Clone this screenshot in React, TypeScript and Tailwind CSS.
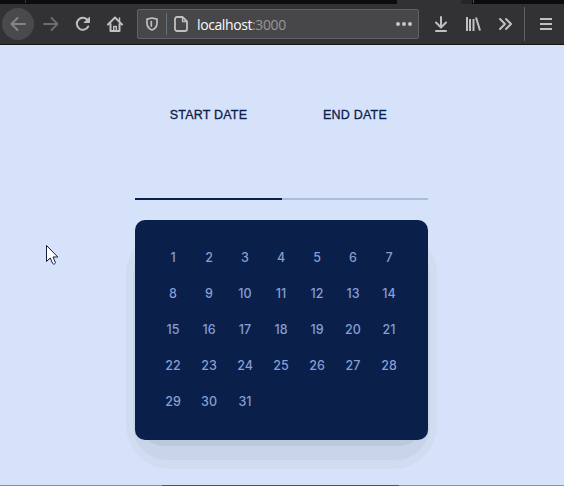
import type { ReactNode } from "react";

const days = Array.from({ length: 31 }, (_, i) => i + 1);

function Icon({ children, className = "", tone = "stroke-[#c0c0c1]" }: { children: ReactNode; className?: string; tone?: string }) {
  return (
    <svg
      viewBox="0 0 16 16"
      className={`block h-4 w-4 shrink-0 fill-none stroke-2 ${tone} ${className}`}
      strokeLinecap="round"
      strokeLinejoin="round"
    >
      {children}
    </svg>
  );
}

function Toolbar() {
  return (
    <header className="h-[45px] border-b border-[#10170f] bg-[#323234]">
      <div className="flex h-1 bg-[#0c0c0d]">
        <div className="h-[3px] w-[26px] border-r border-[#3a3a3b]" />
        <div className="ml-[371px] h-1 w-[64px] bg-[#323234]" />
        <div className="h-1 w-[11px] bg-[#262628]" />
        <div className="ml-px h-[3px] w-px bg-[#4c4c4e]" />
      </div>
      <div className="flex h-10 items-center">
        <div className="ml-[2px] flex h-8 w-8 shrink-0 items-center justify-center rounded-full bg-[#4a4a4c]">
          <Icon tone="stroke-[#858587]">
            <path d="M15 8H1.500M7.500 2 1.500 8l6 6" />
          </Icon>
        </div>
        <Icon className="ml-[9px]" tone="stroke-[#6c6c6e]">
          <path d="M1 8h13.500M8.500 2l6 6-6 6" />
        </Icon>
        <Icon className="ml-4">
          <path d="M13.200 10.500A6 6 0 1 1 12.500 4" />
          <path d="M14.500 1.500v5h-5z" className="fill-[#c0c0c1] stroke-1" />
        </Icon>
        <Icon className="ml-4">
          <path d="M1 8.500l7-7 7 7M3.500 8v7h9V8" />
          <path d="M6.700 15v-4.500h2.600V15" className="stroke-[1.500px]" />
          <path d="M12.500 2v3" className="stroke-[1.500px]" />
        </Icon>
        <div className="ml-[14px] flex h-[30px] w-[282px] shrink-0 items-center rounded-[2px] border border-[#626264] bg-[#474749]">
          <Icon className="ml-[6px]">
            <path d="M8 2 13 3.200V7c0 3.800-1.900 5.900-5 7C4.900 12.900 3 10.800 3 7V3.200z" className="stroke-[1.700px]" />
            <path d="M7.300 5.500v4.500" className="stroke-[1.700px]" />
          </Icon>
          <div className="ml-[6px] h-[22px] w-px bg-[#68707a]" />
          <Icon className="ml-[6px]">
            <path d="M4 1h5.500L14 5.500V13a2 2 0 0 1-2 2H4a2 2 0 0 1-2-2V3a2 2 0 0 1 2-2z" className="stroke-[1.800px]" />
            <path d="M9.500 1.500v4h4" className="stroke-[1.300px]" />
          </Icon>
          <span className="ml-2 pt-[2px] font-['Open_Sans',sans-serif] text-[14px] leading-5 tracking-[-0.4px] text-[#f9f9fa]">
            localhost<span className="text-[#969698]">:3000</span>
          </span>
          <div className="ml-auto mr-[6px] flex gap-[2px]">
            <i className="h-1 w-1 rounded-full bg-[#c4c4c5]" />
            <i className="h-1 w-1 rounded-full bg-[#c4c4c5]" />
            <i className="h-1 w-1 rounded-full bg-[#c4c4c5]" />
          </div>
        </div>
        <Icon className="ml-[14px]">
          <path d="M8 1v10M3 6.500l5 5 5-5M3 15h10" />
        </Icon>
        <Icon className="ml-4">
          <path d="M2 1v14M5 3v12M8.500 3v12M11 1.500l4 13" strokeLinecap="butt" />
        </Icon>
        <Icon className="ml-4">
          <path d="M3 3l5 5-5 5M9 3l5 5-5 5" />
        </Icon>
        <div className="ml-[11px] h-[34px] w-px bg-[#626264]" />
        <Icon className="ml-[13px]">
          <path d="M2 3h12M2 8h12M2 13h12" strokeLinecap="butt" />
        </Icon>
      </div>
    </header>
  );
}

function DateTabs() {
  return (
    <div className="flex h-[155px] w-[293px] text-center text-[12.500px] leading-[18px] tracking-[0.2px] text-[#0b204c] [-webkit-text-stroke:0.3px_#0b204c]">
      <div className="w-[147px] border-b-2 border-[#0b1f4b] pt-[61px]">START DATE</div>
      <div className="w-[146px] border-b-2 border-[#abbbd8] pt-[61px]">END DATE</div>
    </div>
  );
}

function Calendar() {
  return (
    <div className="relative mt-5 h-[220px] w-[293px]">
      <div className="absolute -bottom-[29px] -left-[9px] -right-[9px] top-[10px] rounded-[44px] bg-[#d0dcef]" />
      <div className="absolute -bottom-[20px] -left-[2px] -right-[2px] top-[20px] rounded-[34px] bg-[#c8d5e8]" />
      <div className="absolute -bottom-[6px] left-[6px] right-[6px] top-[35px] rounded-[22px] bg-[#bcc9dc]" />
      <div className="relative h-full rounded-[10px] bg-[#0b1f4b] p-5">
        <div className="grid w-[252px] grid-cols-7">
          {days.map((day) => (
            <button
              key={day}
              className="flex h-9 items-center justify-center pt-px font-['Inter','Liberation_Sans',sans-serif] text-[12.500px] font-medium leading-none text-[#859ed3]"
            >
              {day}
            </button>
          ))}
        </div>
      </div>
    </div>
  );
}

export default function App() {
  return (
    <div className="relative flex h-[486px] w-[564px] flex-col overflow-hidden bg-[#d6e2f9] font-['Liberation_Sans',Arial,sans-serif]">
      <Toolbar />
      <main className="flex flex-1 flex-col pl-[135px]">
        <DateTabs />
        <Calendar />
      </main>
      <div className="flex h-px">
        <div className="w-[162px] bg-[#938d86]" />
        <div className="w-[237px] bg-[#54515b]" />
        <div className="flex-1 bg-[#96938b]" />
      </div>
      <svg className="absolute left-[46px] top-[244px] h-[21px] w-[13px]" viewBox="0 0 13 21">
        <path
          d="M.5 1.500v16l3.700-3.500 2.500 5.500c.8 1.300 3.200.2 2.600-1.200L7 13h4.800z"
          className="fill-white stroke-[#101d3c]"
          strokeWidth="1"
        />
      </svg>
    </div>
  );
}
